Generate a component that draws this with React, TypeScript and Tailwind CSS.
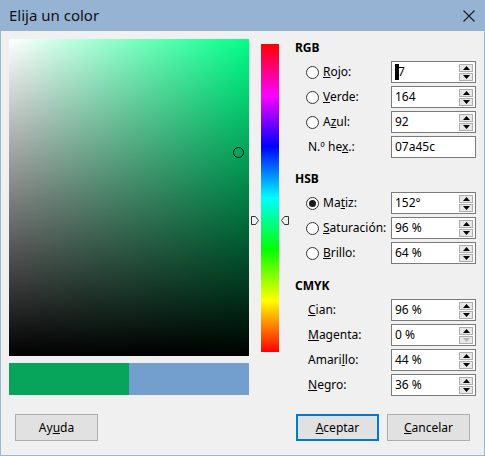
import React from "react";

const font = "font-['Segoe_UI','Noto_Sans',sans-serif]";

const Radio = ({ checked = false }: { checked?: boolean }) => (
  <span className="flex h-[13px] w-[13px] shrink-0 items-center justify-center rounded-full border border-[#333] bg-white">
    {checked && <span className="h-[7px] w-[7px] rounded-full bg-[#1a1a1a]" />}
  </span>
);

const Spin = ({ downDisabled = false }: { downDisabled?: boolean }) => (
  <div className="ml-auto mr-[2px] flex shrink-0 flex-col gap-[1px]">
    <div className="flex h-[8px] w-[14px] items-center justify-center border border-[#adadad] bg-[#e8e8e8]">
      <svg width="7" height="4" viewBox="0 0 7 4">
        <path d="M0 4 L3.5 0 L7 4 Z" fill="#000" />
      </svg>
    </div>
    <div className="flex h-[8px] w-[14px] items-center justify-center border border-[#adadad] bg-[#e8e8e8]">
      <svg width="7" height="4" viewBox="0 0 7 4">
        <path d="M0 0 L7 0 L3.5 4 Z" fill={downDisabled ? "#b5b5b5" : "#000"} />
      </svg>
    </div>
  </div>
);

const Field = ({ children, spin = true, downDisabled = false }: { children: React.ReactNode; spin?: boolean; downDisabled?: boolean }) => (
  <div className="flex h-[22px] w-[85px] shrink-0 items-center border border-[#7a7a7a] bg-white pl-[3px]">
    <span className="flex items-center">{children}</span>
    {spin && <Spin downDisabled={downDisabled} />}
  </div>
);

const Row = ({ radio, checked, label, children }: { radio?: boolean; checked?: boolean; label: React.ReactNode; children: React.ReactNode }) => (
  <div className="flex h-[22px] w-[170px] items-center">
    <div className={`flex w-[85px] shrink-0 items-center ${radio ? "gap-[4px]" : "pl-[2px]"}`}>
      {radio && <Radio checked={checked} />}
      <span>{label}</span>
    </div>
    {children}
  </div>
);

const Heading = ({ children, className = "" }: { children: React.ReactNode; className?: string }) => (
  <div className={`flex h-[17px] items-center text-[12px] font-bold ${className}`}>{children}</div>
);

const Button = ({ children, primary = false }: { children: React.ReactNode; primary?: boolean }) => (
  <button
    className={`flex h-[27px] w-[83px] items-center justify-center bg-[#e1e1e1] text-[12px] ${
      primary ? "border-2 border-[#0078d7]" : "border border-[#adadad]"
    }`}
  >
    {children}
  </button>
);

export default function App() {
  return (
    <div className={`flex h-[456px] w-[485px] flex-col text-[12px] text-black ${font}`}>
      <div className="flex h-[31px] shrink-0 items-center justify-between bg-[#97b3d3] pl-[9px] pr-[8px]">
        <span className="text-[15px] text-[#111]">Elija un color</span>
        <svg width="14" height="14" viewBox="0 0 14 14" className="mr-[1px]">
          <path d="M1.5 1.5 L12.5 12.5 M12.5 1.5 L1.5 12.5" stroke="#1a1a1a" strokeWidth="1.1" />
        </svg>
      </div>

      <div className="flex flex-1 flex-col border-x border-b border-[#9ab6d6] bg-[#f0f0f0]">
        <div className="flex pl-[8px] pt-[8px]">
          <div className="flex w-[240px] shrink-0 flex-col">
            <div className="relative h-[317px] w-[240px] bg-[#00ff88] bg-[image:linear-gradient(to_top,#000,rgba(0,0,0,0)),linear-gradient(to_right,#fff,rgba(255,255,255,0))]">
              <span className="absolute left-[224px] top-[108px] h-[11px] w-[11px] rounded-full border border-black" />
            </div>
            <div className="mt-[7px] flex h-[32px]">
              <div className="w-[120px] bg-[#07a45c]" />
              <div className="w-[120px] bg-[#739fcf]" />
            </div>
          </div>

          <div className="relative ml-[2px] w-[38px] shrink-0 pt-[5px]">
            <div className="ml-[10px] h-[308px] w-[18px] bg-[linear-gradient(to_bottom,#ff0000,#ff00ff,#0000ff,#00ffff,#00ff00,#ffff00,#ff0000)]" />
            <svg width="8" height="9" viewBox="0 0 8 9" className="absolute left-0 top-[177px]">
              <path d="M0.5 0.5 H4.5 L7.5 4.5 L4.5 8.5 H0.5 Z" fill="#f0f0f0" stroke="#333" />
            </svg>
            <svg width="8" height="9" viewBox="0 0 8 9" className="absolute left-[30px] top-[177px]">
              <path d="M7.5 0.5 H3.5 L0.5 4.5 L3.5 8.5 H7.5 Z" fill="#f0f0f0" stroke="#333" />
            </svg>
          </div>

          <div className="flex shrink-0 flex-col pl-[6px]">
            <Heading>RGB</Heading>
            <div className="mt-[5px] flex flex-col gap-[3px] pl-[11px]">
              <Row radio label={<><u>R</u>ojo:</>}>
                <Field>
                  <span className="h-[16px] w-[4px] bg-black" />
                  <span className="-ml-[1px]">7</span>
                </Field>
              </Row>
              <Row radio label={<><u>V</u>erde:</>}>
                <Field>164</Field>
              </Row>
              <Row radio label={<>A<u>z</u>ul:</>}>
                <Field>92</Field>
              </Row>
              <Row label={<>N.º he<u>x</u>.:</>}>
                <Field spin={false}>07a45c</Field>
              </Row>
            </div>

            <Heading className="mt-[12px]">HSB</Heading>
            <div className="mt-[5px] flex flex-col gap-[3px] pl-[11px]">
              <Row radio checked label={<>Ma<u>t</u>iz:</>}>
                <Field>152°</Field>
              </Row>
              <Row radio label={<><u>S</u>aturación:</>}>
                <Field>96 %</Field>
              </Row>
              <Row radio label={<><u>B</u>rillo:</>}>
                <Field>64 %</Field>
              </Row>
            </div>

            <Heading className="mt-[13px]">CMYK</Heading>
            <div className="mt-[5px] flex flex-col gap-[3px] pl-[11px]">
              <Row label={<><u>C</u>ian:</>}>
                <Field>96 %</Field>
              </Row>
              <Row label={<><u>M</u>agenta:</>}>
                <Field downDisabled>0 %</Field>
              </Row>
              <Row label={<>Amari<u>l</u>lo:</>}>
                <Field>44 %</Field>
              </Row>
              <Row label={<><u>N</u>egro:</>}>
                <Field>36 %</Field>
              </Row>
            </div>
          </div>
        </div>

        <div className="mb-[14px] mt-auto flex items-center pl-[14px] pr-[14px]">
          <Button>
            Ay<u>u</u>da
          </Button>
          <div className="ml-auto flex gap-[8px]">
            <Button primary>
              <u>A</u>ceptar
            </Button>
            <Button>
              <u>C</u>ancelar
            </Button>
          </div>
        </div>
      </div>
    </div>
  );
}
